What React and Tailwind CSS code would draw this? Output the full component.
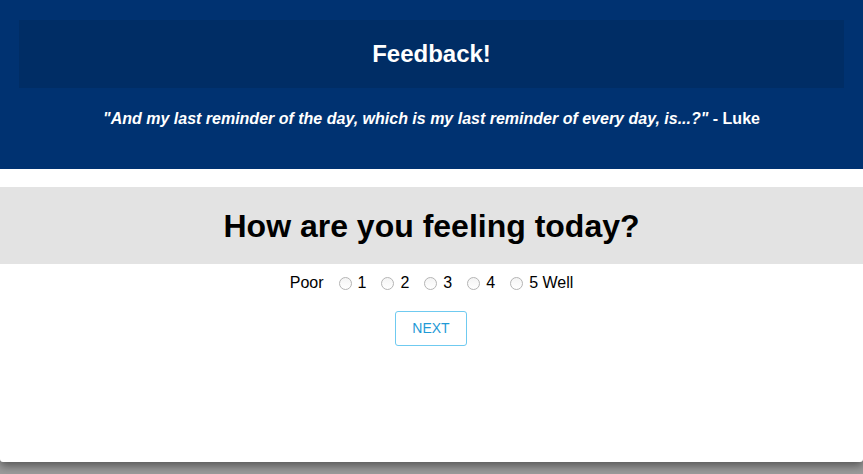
import React, { useState } from 'react';

const OPTIONS = [1, 2, 3, 4, 5];

export default function App() {
  const [rating, setRating] = useState(null);

  return (
    <div className="h-[474px] w-[863px] overflow-hidden bg-[#9c9c9c] font-['Liberation_Sans',Arial,sans-serif]">
      <div className="flex h-[462px] flex-col rounded-b-[3px] bg-white shadow-[0_4px_10px_rgba(0,0,0,0.45)]">
        <header className="h-[169px] bg-[#003271] px-[19px] pt-[20px]">
          <div className="flex h-[68px] items-center justify-center bg-[#002d65]">
            <h1 className="text-[24px] font-bold text-white">Feedback!</h1>
          </div>
          <p className="mt-[19px] text-center text-[16px] font-bold text-white">
            <i>"And my last reminder of the day, which is my last reminder of every day, is...?"</i> - Luke
          </p>
        </header>

        <section className="mt-[18px] flex h-[77px] items-center justify-center bg-[#e3e3e3]">
          <h2 className="text-[32px] font-bold text-black">How are you feeling today?</h2>
        </section>

        <div className="mt-[7px] flex items-center justify-center gap-[15px] text-[16px] text-black">
          <span>Poor</span>
          {OPTIONS.map(n => (
            <label key={n} className="flex items-center gap-[6px]">
              <input
                type="radio"
                name="rating"
                checked={rating === n}
                onChange={() => setRating(n)}
                className="m-0 h-[13px] w-[13px] appearance-none rounded-full border border-[#b4b4b4] bg-gradient-to-b from-[#f4f4f4] to-white checked:border-[4px] checked:border-[#2a9fd6]"
              />
              <span>{n}{n === 5 ? ' Well' : ''}</span>
            </label>
          ))}
        </div>

        <div className="mt-[16px] flex justify-center">
          <button className="-ml-px h-[35px] w-[72px] rounded-[3px] border border-[#6fcaf0] text-[14px] text-[#1f9ad6]">
            NEXT
          </button>
        </div>
      </div>
    </div>
  );
}
